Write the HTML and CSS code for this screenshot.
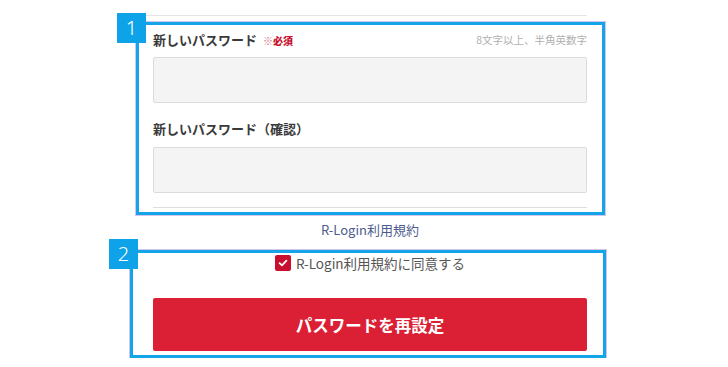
FILE: index.html
```html
<!DOCTYPE html>
<html lang="ja">
<head>
  <meta charset="UTF-8">
  <meta name="viewport" content="width=device-width, initial-scale=1.0">
  <title>パスワード再設定</title>
  <link rel="stylesheet" href="styles.css">
</head>
<body>
  <div class="top-rule"></div>

  <div class="mark-box mark-box-1">
    <span class="badge badge-1">1</span>

    <div class="field-head">
      <span class="field-label">新しいパスワード <em class="required">※<b>必須</b></em></span>
      <span class="field-hint">8文字以上、半角英数字</span>
    </div>
    <div class="input"></div>

    <div class="field-head field-head-2">
      <span class="field-label">新しいパスワード（確認）</span>
    </div>
    <div class="input input-2"></div>

    <div class="inner-rule"></div>
  </div>

  <a class="terms-link">R-Login利用規約</a>

  <div class="mark-box mark-box-2">
    <span class="badge badge-2">2</span>

    <label class="agree">
      <span class="checkbox">
        <svg width="10" height="10" viewBox="0 0 10 10"><path d="M1.6 5.2 L4 7.4 L8.4 2.6" fill="none" stroke="#fff" stroke-width="1.8" stroke-linecap="round" stroke-linejoin="round"/></svg>
      </span>
      R-Login利用規約に同意する
    </label>

    <div class="submit">パスワードを再設定</div>
  </div>
</body>
</html>
```

FILE: styles.css
```css
* {
  margin: 0;
  padding: 0;
  box-sizing: border-box;
}

body {
  width: 728px;
  background: #fff;
  font-family: "Noto Sans CJK JP", "Noto Sans", sans-serif;
  color: #333;
}

.top-rule {
  margin: 15px 0 0 143px;
  width: 444px;
  height: 1px;
  background: #e4e4e4;
}

/* highlight boxes */
.mark-box {
  position: relative;
  border: 3px solid #16a4e8;
  box-shadow: 0 0 0 1px rgba(150, 130, 215, 0.45);
}

.mark-box-1 {
  margin: 6px 0 0 136px;
  width: 469px;
  padding: 4px 15px 4px 14px;
}

.mark-box-2 {
  margin: 10px 0 0 130px;
  width: 476px;
  padding: 0 16px 4px 20px;
}

.badge {
  position: absolute;
  width: 29px;
  height: 30px;
  display: flex;
  align-items: center;
  justify-content: center;
  background: #0ea2e8;
  color: #fff;
  font-family: "Noto Sans", sans-serif;
  font-size: 20px;
  font-weight: 300;
  line-height: 1;
}

.badge-1 {
  left: -22px;
  top: -12px;
}

.badge-2 {
  left: -24px;
  top: -14px;
}

/* form fields */
.field-head {
  height: 20px;
  display: flex;
  align-items: center;
  justify-content: space-between;
}

.field-head-2 {
  margin-top: 15px;
}

.field-label {
  font-size: 13px;
  font-weight: bold;
  color: #3a3a3a;
}

.required {
  font-style: normal;
  font-size: 10px;
  color: #e07080;
  margin-left: 3px;
}

.required b {
  color: #c8102e;
}

.field-hint {
  font-size: 10.5px;
  color: #b0b0b0;
}

.input {
  margin-top: 8px;
  height: 46px;
  background: #f4f4f4;
  border: 1px solid #dcdcdc;
  border-radius: 2px;
}

.input-2 {
  margin-top: 9px;
}

.inner-rule {
  margin-top: 14px;
  height: 1px;
  background: #dedede;
}

.terms-link {
  display: block;
  margin: 5px 0 0 153px;
  width: 434px;
  height: 20px;
  line-height: 20px;
  text-align: center;
  font-size: 13px;
  color: #4d5b8e;
}

/* agreement */
.agree {
  height: 19px;
  display: flex;
  align-items: center;
  justify-content: center;
  gap: 5px;
  font-size: 13.5px;
  color: #555;
}

.checkbox {
  width: 16px;
  height: 16px;
  display: flex;
  align-items: center;
  justify-content: center;
  background: #c8102e;
  border-radius: 2px;
}

.submit {
  margin-top: 26px;
  height: 53px;
  display: flex;
  align-items: center;
  justify-content: center;
  background: #db1f35;
  border-radius: 2px;
  color: #fff;
  font-size: 16.5px;
  font-weight: bold;
}
```
